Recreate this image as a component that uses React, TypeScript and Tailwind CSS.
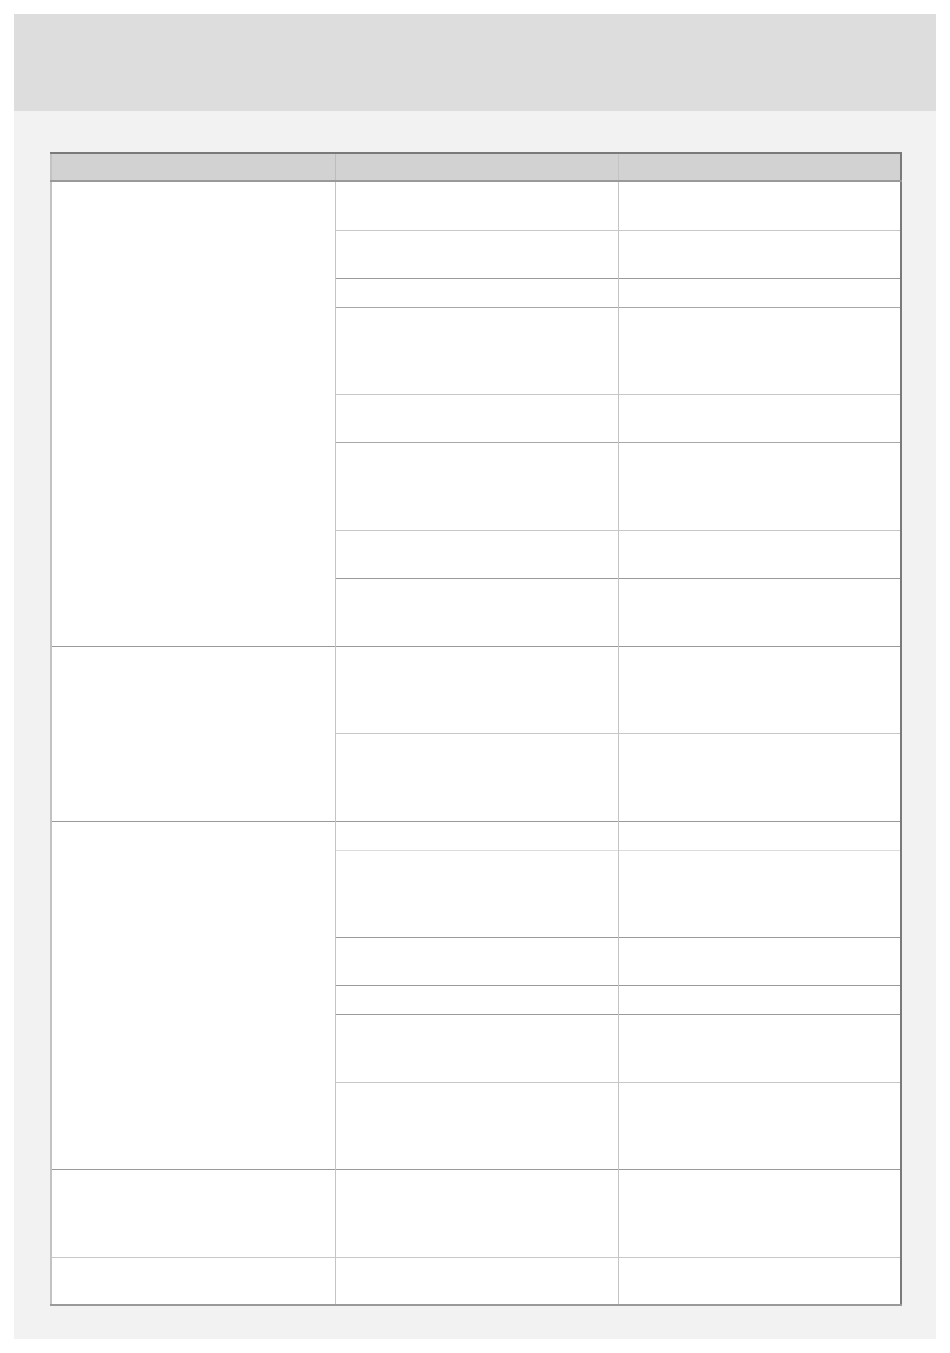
const groups = [
  {
    rows: [
      { h: 'h-[49px]', line: 'border-t-[#bdbdbd]' },
      { h: 'h-[48px]', line: 'border-t-[#c8c8c8]' },
      { h: 'h-[29px]', line: 'border-t-[#9a9a9a]' },
      { h: 'h-[87px]', line: 'border-t-[#a8a8a8]' },
      { h: 'h-[48px]', line: 'border-t-[#c8c8c8]' },
      { h: 'h-[88px]', line: 'border-t-[#a8a8a8]' },
      { h: 'h-[48px]', line: 'border-t-[#c8c8c8]' },
      { h: 'h-[68px]', line: 'border-t-[#9a9a9a]' },
    ],
    first: 'border-t-[#dcdcdc]',
  },
  {
    rows: [
      { h: 'h-[87px]', line: 'border-t-[#9a9a9a]' },
      { h: 'h-[88px]', line: 'border-t-[#c8c8c8]' },
    ],
    first: 'border-t-[#9a9a9a]',
  },
  {
    rows: [
      { h: 'h-[29px]', line: 'border-t-[#9a9a9a]' },
      { h: 'h-[87px]', line: 'border-t-[#dcdcdc]' },
      { h: 'h-[48px]', line: 'border-t-[#9a9a9a]' },
      { h: 'h-[29px]', line: 'border-t-[#9a9a9a]' },
      { h: 'h-[68px]', line: 'border-t-[#9a9a9a]' },
      { h: 'h-[87px]', line: 'border-t-[#c8c8c8]' },
    ],
    first: 'border-t-[#9a9a9a]',
  },
  {
    rows: [{ h: 'h-[88px]', line: 'border-t-[#9a9a9a]' }],
    first: 'border-t-[#9a9a9a]',
  },
  {
    rows: [{ h: 'h-[48px]', line: 'border-t-[#c8c8c8]' }],
    first: 'border-t-[#c8c8c8]',
  },
];

export default function App() {
  return (
    <div className="min-h-screen bg-white p-[14px] font-['Liberation_Sans',sans-serif]">
      <div className="bg-[#f2f2f2]">
        <div className="h-[97px] bg-[#dddddd]"></div>
        <div className="pl-[36px] pr-[37px] pt-[41px] pb-[33px]">
          <table className="w-[850px] table-fixed border-collapse bg-white border-t-2 border-t-[#7a7a7a] border-r-2 border-r-[#7a7a7a] border-b-2 border-b-[#9a9a9a] border-l-2 border-l-[#c2c2c2]">
            <thead>
              <tr className="h-[28px] bg-[#d2d2d2]">
                <th className="w-[284px] border-r border-r-[#bdbdbd] border-b-2 border-b-[#999999]"></th>
                <th className="w-[283px] border-r border-r-[#c4c4c4] border-b-2 border-b-[#999999]"></th>
                <th className="w-[283px] border-b-2 border-b-[#999999]"></th>
              </tr>
            </thead>
            <tbody>
              {groups.map((g, gi) =>
                g.rows.map((r, ri) => (
                  <tr key={`${gi}-${ri}`} className={r.h}>
                    {ri === 0 && (
                      <td rowSpan={g.rows.length} className={`border-r border-r-[#c4c4c4] border-t ${g.first}`}></td>
                    )}
                    <td className={`border-r border-r-[#c4c4c4] border-t ${r.line}`}></td>
                    <td className={`border-t ${r.line}`}></td>
                  </tr>
                ))
              )}
            </tbody>
          </table>
        </div>
      </div>
    </div>
  );
}
